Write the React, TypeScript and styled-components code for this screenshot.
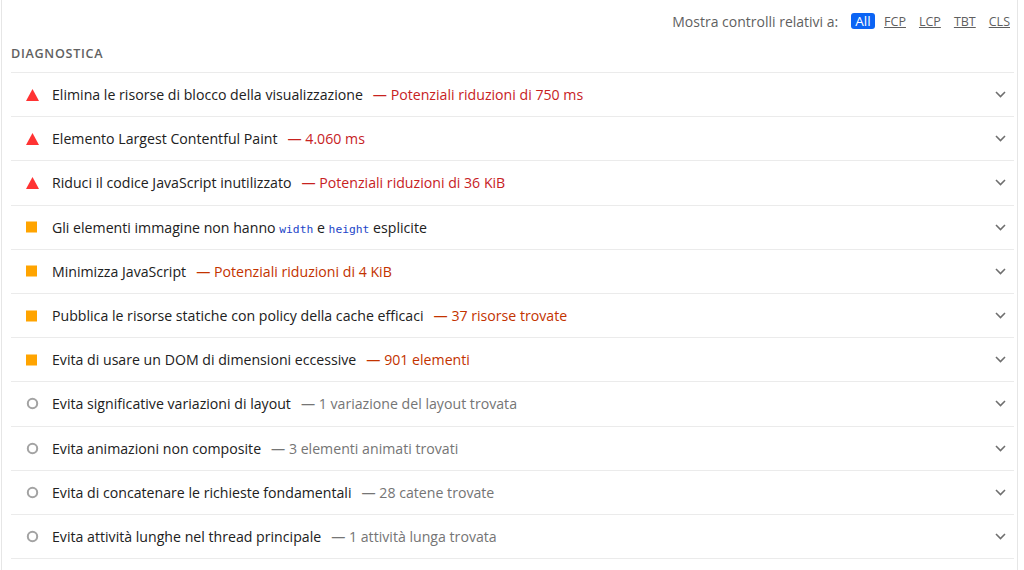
import type { ReactNode } from 'react';
import styled, { createGlobalStyle } from 'styled-components';

type Level = 'fail' | 'average' | 'info';

type Audit = {
    title: ReactNode;
    detail: string;
    level: Level;
};

const filters = ['FCP', 'LCP', 'TBT', 'CLS'];

const detailColor: Record<Level, string> = {
    fail: '#c7221f',
    average: '#c33300',
    info: '#757575'
};

const StatusIcon = ({ level }: { level: Level }) => {
    if (level === 'fail') {
        return (
            <svg width="13" height="12" viewBox="0 0 13 12">
                <polygon points="6.5,0 13,12 0,12" fill="#ff3333" />
            </svg>
        );
    }
    if (level === 'average') {
        return (
            <svg width="12" height="12" viewBox="0 0 12 12">
                <rect x="0" y="0.5" width="11" height="11" fill="#ffa400" />
            </svg>
        );
    }
    return (
        <svg width="13" height="13" viewBox="0 0 13 13">
            <circle cx="6.5" cy="6.5" r="4.7" fill="none" stroke="#a3a3a3" strokeWidth="2" />
        </svg>
    );
};

const Chevron = () => (
    <svg width="11" height="7" viewBox="0 0 11 7">
        <path d="M1 1 L5.5 5.5 L10 1" fill="none" stroke="#6f6f6f" strokeWidth="1.6" />
    </svg>
);

const App = () => {
    return (
        <>
            <GlobalStyle />
            <Panel>
                <FilterBar>
                    <FilterLabel>Mostra controlli relativi a:</FilterLabel>
                    <Badge>All</Badge>
                    {filters.map((f) => (
                        <FilterLink key={f}>{f}</FilterLink>
                    ))}
                </FilterBar>
                <GroupTitle>Diagnostica</GroupTitle>
                <List>
                    {getAudits().map((audit, i) => (
                        <Row key={i}>
                            <IconCell>
                                <StatusIcon level={audit.level} />
                            </IconCell>
                            <Title>
                                {audit.title}
                                {audit.detail && (
                                    <Detail $level={audit.level}>— {audit.detail}</Detail>
                                )}
                            </Title>
                            <Chevron />
                        </Row>
                    ))}
                </List>
            </Panel>
        </>
    );
};

export default App;

const GlobalStyle = createGlobalStyle`
    body {
        margin: 0;
        background: #fff;
        font-family: 'Open Sans', 'Noto Sans', sans-serif;
        color: #212121;
    }
`;

const Panel = styled.div`
    margin-left: 1px;
    width: 1017px;
    height: 570px;
    box-sizing: border-box;
    border-left: 1px solid #e6e6e6;
    border-right: 1px solid #e6e6e6;
    padding: 0 3px 0 9px;
`;

const FilterBar = styled.div`
    display: flex;
    align-items: center;
    justify-content: flex-end;
    height: 42px;
    padding-right: 4px;
`;

const FilterLabel = styled.span`
    color: #5f5f5f;
    font-size: 14px;
    margin-right: 13px;
`;

const Badge = styled.span`
    display: inline-flex;
    align-items: center;
    justify-content: center;
    height: 16px;
    padding: 0 4px;
    border-radius: 3px;
    background: #0b64f4;
    color: #fff;
    font-size: 13.5px;
    margin-right: 3px;
`;

const FilterLink = styled.span`
    color: #5f5f5f;
    font-size: 12.5px;
    text-decoration: underline;
    margin: 0 6.5px;

    &:last-child {
        margin-right: 0;
    }
`;

const GroupTitle = styled.h2`
    margin: 0;
    height: 30px;
    box-sizing: border-box;
    display: flex;
    align-items: center;
    padding-bottom: 8px;
    font-size: 12.6px;
    font-weight: 600;
    letter-spacing: 0.7px;
    text-transform: uppercase;
    color: #616161;
`;

const List = styled.div`
    border-top: 1px solid #ebebeb;
`;

const Row = styled.div`
    display: flex;
    align-items: center;
    height: 43.2px;
    border-bottom: 1px solid #ebebeb;
    padding-right: 8px;
`;

const IconCell = styled.span`
    display: flex;
    align-items: center;
    width: 41px;
    padding-left: 15px;
    box-sizing: border-box;
`;

const Title = styled.span`
    flex: 1;
    font-size: 14.15px;
    color: #212121;
    white-space: nowrap;
`;

const Detail = styled.span<{ $level: Level }>`
    margin-left: 10px;
    color: ${({ $level }) => detailColor[$level]};
`;

const Code = styled.code`
    font-family: 'DejaVu Sans Mono', 'Liberation Mono', monospace;
    font-size: 11.3px;
    color: #1d46c8;
`;

function getAudits(): Audit[] {
    return [
        { level: 'fail', title: 'Elimina le risorse di blocco della visualizzazione', detail: 'Potenziali riduzioni di 750 ms' },
        { level: 'fail', title: 'Elemento Largest Contentful Paint', detail: '4.060 ms' },
        { level: 'fail', title: 'Riduci il codice JavaScript inutilizzato', detail: 'Potenziali riduzioni di 36 KiB' },
        {
            level: 'average',
            title: (
                <>
                    Gli elementi immagine non hanno <Code>width</Code> e <Code>height</Code> esplicite
                </>
            ),
            detail: ''
        },
        { level: 'average', title: 'Minimizza JavaScript', detail: 'Potenziali riduzioni di 4 KiB' },
        { level: 'average', title: 'Pubblica le risorse statiche con policy della cache efficaci', detail: '37 risorse trovate' },
        { level: 'average', title: 'Evita di usare un DOM di dimensioni eccessive', detail: '901 elementi' },
        { level: 'info', title: 'Evita significative variazioni di layout', detail: '1 variazione del layout trovata' },
        { level: 'info', title: 'Evita animazioni non composite', detail: '3 elementi animati trovati' },
        { level: 'info', title: 'Evita di concatenare le richieste fondamentali', detail: '28 catene trovate' },
        { level: 'info', title: 'Evita attività lunghe nel thread principale', detail: '1 attività lunga trovata' }
    ];
}
